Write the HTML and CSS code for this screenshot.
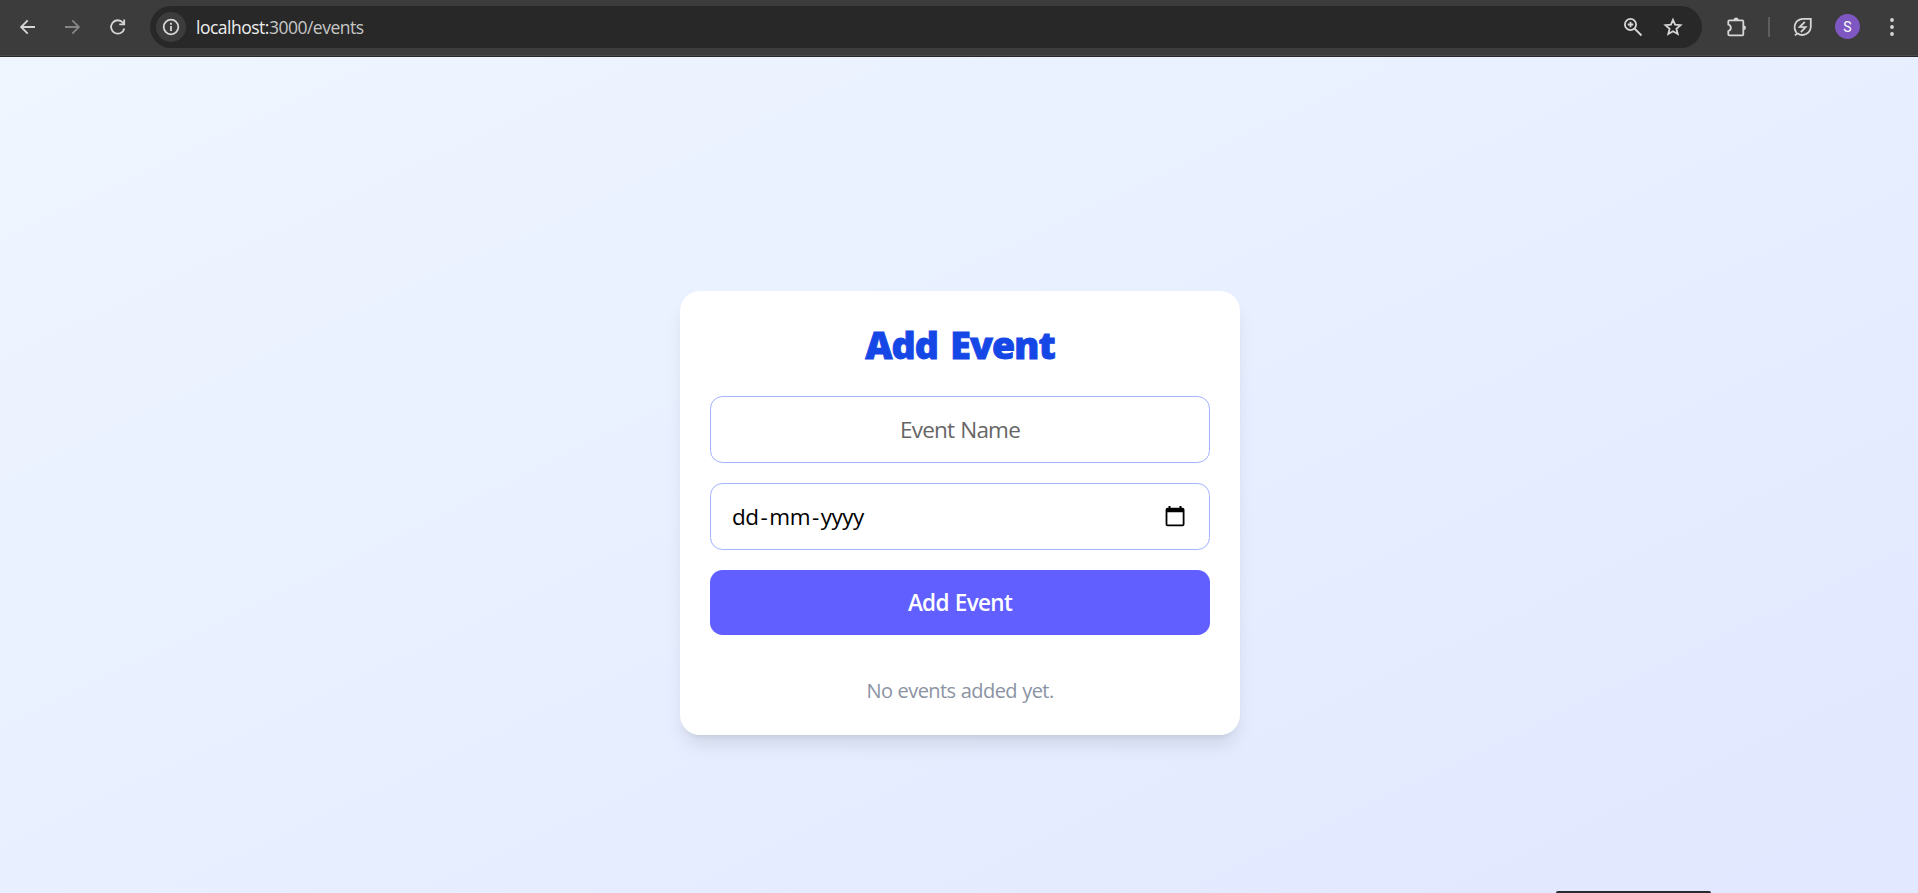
FILE: index.html
```html
<!DOCTYPE html>
<html lang="en">
<head>
<meta charset="utf-8">
<title>Events</title>
<link rel="stylesheet" href="styles.css">
</head>
<body>
<header class="toolbar">
  <nav class="nav">
    <svg class="icon" width="20" height="20" viewBox="0 0 20 20"><path d="M17 10H3.500M9.700 3.400L3.100 10l6.600 6.600"/></svg>
    <svg class="icon icon-muted" width="20" height="20" viewBox="0 0 20 20"><path d="M2 10H15.500M9.300 3.400L15.900 10l-6.600 6.600"/></svg>
    <svg class="icon" width="20" height="20" viewBox="0 0 20 20"><path d="M16.300 11.500A6.700 6.700 0 1 1 14.800 5.500L16.300 7.200M16.200 2.500V7.300H11.300"/></svg>
  </nav>
  <div class="address">
    <span class="info"><svg class="icon" width="20" height="20" viewBox="0 0 20 20"><circle cx="10" cy="10" r="7.300"/><path d="M10 9V14M10 5.700V7.700"/></svg></span>
    <span class="url">localhost:<span class="url-path">3000/events</span></span>
    <svg class="icon zoom" width="20" height="20" viewBox="0 0 20 20"><circle cx="7.500" cy="7.500" r="5.600"/><path d="M11.500 11.500L18.500 18.500M7.500 4.700V10.300M4.700 7.500H10.300"/></svg>
    <svg class="icon star" width="20" height="20" viewBox="0 0 20 20"><path d="M10 2.800L12.100 7.700L17.500 8.200L13.400 11.700L14.700 17L10 14.200L5.300 17L6.600 11.700L2.500 8.200L7.900 7.700Z"/></svg>
  </div>
  <svg class="icon puzzle" width="22" height="22" viewBox="0 0 22 22"><path d="M3.500 4.300H16.300Q17.300 4.300 17.300 5.300V18.300Q17.300 19.300 16.300 19.300H3.300Q2.300 19.300 2.300 18.300V15.200C5.700 14.200 5.700 9.500 2.300 8.500V5.300Q2.300 4.300 3.500 4.300Z"/><path class="solid" d="M7.600 4a2.500 2.500 0 0 1 5 0zM17.500 9.200a2.500 2.500 0 0 1 0 5z"/></svg>
  <span class="divider"></span>
  <svg class="icon leaf" width="22" height="22" viewBox="0 0 22 22"><path d="M4.500 16.700C1 12 2.200 3.500 11 2.900H18.800V9.600C19.200 17 11.500 21.500 5.300 17.300L3 19.400M12.800 5.800L7.700 11L13.600 11.200L8.900 16.200"/></svg>
  <span class="avatar">S</span>
  <svg class="icon dots" width="6" height="20" viewBox="0 0 6 20"><g class="solid"><circle cx="3" cy="3" r="1.900"/><circle cx="3" cy="10" r="1.900"/><circle cx="3" cy="17" r="1.900"/></g></svg>
</header>
<main class="page">
  <section class="card">
    <h1 class="title">Add Event</h1>
    <form class="form">
      <div class="field field-name"><span>Event Name</span></div>
      <div class="field field-date"><span class="date">dd<i>-</i>mm<i>-</i>yyyy</span>
        <svg width="20" height="22" viewBox="0 0 20 22"><path d="M2.500 1.800H3.500V0H5.500V1.800H14.500V0H16.500V1.800H17.500Q19.500 1.800 19.500 3.800V18.200Q19.500 20.200 17.500 20.200H2.500Q.6 20.200 .6 18.200V3.800Q.6 1.800 2.500 1.800ZM2.400 6.200V18.500H17.700V6.200Z" fill-rule="evenodd"/></svg>
      </div>
      <button class="submit" type="button">Add Event</button>
    </form>
    <p class="empty">No events added yet.</p>
  </section>
</main>
<div class="tooltip"></div>
</body>
</html>
```
FILE: styles.css
```css
* { box-sizing: border-box; }
body {
  display: flex;
  flex-direction: column;
  height: 100vh;
  margin: 0;
  overflow: hidden;
  font-family: "Open Sans", "Noto Sans", sans-serif;
}
.toolbar {
  display: flex;
  flex: none;
  align-items: center;
  height: 57px;
  padding: 0 23px 3px 18px;
  background: #3c3c3c;
  border-bottom: 1px solid #282828;
  box-shadow: inset 0 -1px #4a4a4a;
}
.icon { display: block; flex: none; fill: none; stroke: #d6d6d6; stroke-width: 1.8; }
.icon-muted { stroke: #858585; }
.solid { fill: #d6d6d6; stroke: none; }
.nav { display: flex; gap: 25px; width: 132px; }
.address {
  display: flex;
  align-items: center;
  width: 1552px;
  height: 42px;
  padding: 0 19px 0 6px;
  border-radius: 21px;
  background: #282828;
}
.info { display: grid; place-items: center; width: 30px; height: 30px; border-radius: 50%; background: #3c3c3c; }
.url { margin-left: 10px; font-size: 17.500px; line-height: 24px; letter-spacing: -0.500px; color: #eee; white-space: nowrap; }
.url-path { color: #c7c7c7; }
.zoom { margin-left: auto; }
.star { margin-left: 20px; }
.puzzle { margin-left: 24px; }
.divider { width: 2px; height: 20px; margin-left: 20px; background: #5e5e5e; }
.leaf { margin-left: 22px; }
.avatar {
  display: grid;
  place-items: center;
  width: 25px;
  height: 25px;
  margin-left: 21px;
  border-radius: 50%;
  background: #7e57c2;
  color: #fff;
  font: 14px Roboto, sans-serif;
}
.dots { margin-left: auto; }
.page {
  display: flex;
  flex: 1;
  justify-content: center;
  align-items: center;
  min-height: 0;
  padding: 76px 0 0 2px;
  background: linear-gradient(to bottom right, #eff6ff, #e0e7ff) 0 0 / 100% 912px;
}
.card {
  width: 560px;
  height: 444px;
  padding: 30px;
  border-radius: 20px;
  background: #fff;
  box-shadow: 0 12.500px 19px -4px rgba(0, 0, 0, .1), 0 5px 7.500px -5px rgba(0, 0, 0, .1);
  text-align: center;
}
.title {
  margin: -1px 0 26px;
  font-size: 37.500px;
  line-height: 50px;
  font-weight: 800;
  letter-spacing: -0.900px;
  word-spacing: 3.500px;
  -webkit-text-stroke: .9px #1447e6;
  color: #1447e6;
}
.form { display: flex; flex-direction: column; gap: 20px; }
.field {
  display: flex;
  align-items: center;
  height: 67px;
  padding: 0 24px 0 21px;
  border: 1px solid #a3b3ff;
  border-radius: 12.500px;
  font-size: 22.500px;
}
.field-name { justify-content: center; padding: 0; letter-spacing: -0.800px; word-spacing: 1px; color: #666; }
.field-date { justify-content: space-between; letter-spacing: -0.500px; color: #000; }
.date i { font-style: normal; padding: 0 2px; }
.submit {
  height: 65px;
  padding: 0;
  border: 0;
  border-radius: 12.500px;
  background: #615fff;
  color: #fff;
  font: 600 22.500px "Open Sans", "Noto Sans", sans-serif;
  letter-spacing: -0.700px;
  word-spacing: 1px;
}
.empty { margin: 41px 0 0; font-size: 20px; line-height: 30px; letter-spacing: -0.550px; word-spacing: .5px; color: #8b93a3; }
.tooltip {
  position: absolute;
  left: 1556px;
  top: 891px;
  width: 155px;
  height: 2px;
  border-radius: 5px 5px 0 0;
  background: #2b2b2f;
}
```
